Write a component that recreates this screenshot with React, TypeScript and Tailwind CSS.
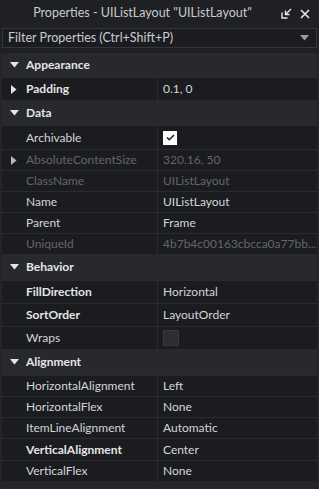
import React from "react";

type Row = {
  name: string;
  value?: string;
  bold?: boolean;
  dim?: boolean;
  arrow?: boolean;
  check?: "on" | "off";
  h: string;
};

type Section = { title: string; h: string; rows: Row[] };

const sections: Section[] = [
  {
    title: "Appearance",
    h: "h-[24px]",
    rows: [{ name: "Padding", value: "0.1, 0", bold: true, arrow: true, h: "h-[23px]" }],
  },
  {
    title: "Data",
    h: "h-[25px]",
    rows: [
      { name: "Archivable", check: "on", h: "h-[24px]" },
      { name: "AbsoluteContentSize", value: "320.16, 50", dim: true, arrow: true, h: "h-[21px]" },
      { name: "ClassName", value: "UIListLayout", dim: true, h: "h-[21px]" },
      { name: "Name", value: "UIListLayout", h: "h-[21px]" },
      { name: "Parent", value: "Frame", h: "h-[21px]" },
      { name: "UniqueId", value: "4b7b4c00163cbcca0a77bb...", dim: true, h: "h-[21px]" },
    ],
  },
  {
    title: "Behavior",
    h: "h-[26px]",
    rows: [
      { name: "FillDirection", value: "Horizontal", bold: true, h: "h-[23px]" },
      { name: "SortOrder", value: "LayoutOrder", bold: true, h: "h-[23px]" },
      { name: "Wraps", check: "off", h: "h-[23px]" },
    ],
  },
  {
    title: "Alignment",
    h: "h-[26px]",
    rows: [
      { name: "HorizontalAlignment", value: "Left", h: "h-[21px]" },
      { name: "HorizontalFlex", value: "None", h: "h-[21px]" },
      { name: "ItemLineAlignment", value: "Automatic", h: "h-[21px]" },
      { name: "VerticalAlignment", value: "Center", bold: true, h: "h-[22px]" },
      { name: "VerticalFlex", value: "None", h: "h-[21px]" },
    ],
  },
];

function Down({ className = "" }: { className?: string }) {
  return (
    <svg width="9" height="6" viewBox="0 0 9 6" className={className}>
      <path d="M0 0h9L4.5 5.5z" fill="currentColor" />
    </svg>
  );
}

function Right() {
  return (
    <svg width="6" height="9" viewBox="0 0 6 9">
      <path d="M0 0v9l5.5-4.5z" fill="currentColor" />
    </svg>
  );
}

export default function App() {
  return (
    <div
      className="w-[319px] h-[489px] bg-[#242529] overflow-hidden text-[12px] text-[#d4d5d8]"
      style={{ fontFamily: "Lato, 'Noto Sans', sans-serif" }}
    >
      {/* Title bar */}
      <div className="h-[27px] flex items-center bg-[#1f2023] relative">
        <span className="flex-1 text-center pr-[34px] text-[12.5px] text-[#c9cbcf]">
          Properties - UIListLayout "UIListLayout"
        </span>
        <div className="absolute right-[9px] top-[8px] flex items-center gap-[8px] text-[#e6e6e6]">
          <svg width="11" height="11" viewBox="0 0 11 11" fill="none" stroke="currentColor" strokeWidth="1.4">
            <path d="M1 4.5V10h5.5" />
            <path d="M10 1L4.5 6.5M4.5 2.5v4h4" />
          </svg>
          <svg width="10" height="10" viewBox="0 0 10 10" fill="none" stroke="currentColor" strokeWidth="1.6">
            <path d="M1 1l8 8M9 1l-8 8" />
          </svg>
        </div>
      </div>

      {/* Filter */}
      <div className="px-[2px] pt-[1px] bg-[#1f2023]">
        <div className="h-[20px] flex items-center justify-between border border-[#35363b] bg-[#1b1c1f] pl-[5px] pr-[7px]">
          <span className="text-[12.5px] text-[#c9cbcf]">Filter Properties (Ctrl+Shift+P)</span>
          <Down className="text-[#9a9ba0]" />
        </div>
      </div>
      <div className="h-[5px] bg-[#1f2023]" />

      {/* Properties */}
      <div className="pl-[2px] pr-[2px]">
        {sections.map((s) => (
          <div key={s.title}>
            <div className={`${s.h} flex items-center bg-[#28292d] font-bold text-[#e4e5e7]`}>
              <span className="w-[24px] flex justify-center text-[#e4e5e7]">
                <Down />
              </span>
              <span>{s.title}</span>
            </div>
            {s.rows.map((r) => (
              <div
                key={r.name}
                className={`${r.h} flex bg-[#1b1c20] border-t border-[#2a2b30] first:border-t-0`}
              >
                <div className="w-[156px] shrink-0 flex items-center border-r border-[#2a2b30]">
                  <span
                    className={`w-[24px] flex justify-center ${r.dim ? "text-[#b8b9bd]" : "text-[#e4e5e7]"}`}
                  >
                    {r.arrow && <Right />}
                  </span>
                  <span
                    className={`${r.bold ? "font-bold text-[#e4e5e7]" : ""} ${r.dim ? "text-[#64656b]" : ""}`}
                  >
                    {r.name}
                  </span>
                </div>
                <div className="flex-1 min-w-0 flex items-center pl-[5px]">
                  {r.check === "on" && (
                    <div className="w-[14px] h-[14px] bg-white flex items-center justify-center">
                      <svg width="9" height="7" viewBox="0 0 9 7" fill="none" stroke="#222" strokeWidth="1.6">
                        <path d="M1 3.5l2.3 2.2L8 1" />
                      </svg>
                    </div>
                  )}
                  {r.check === "off" && (
                    <div className="w-[16px] h-[16px] bg-[#2d2e33] border border-[#3a3b40] rounded-[1px]" />
                  )}
                  {r.value && (
                    <span className={`whitespace-nowrap ${r.dim ? "text-[#64656b]" : ""}`}>{r.value}</span>
                  )}
                </div>
              </div>
            ))}
          </div>
        ))}
      </div>
    </div>
  );
}
